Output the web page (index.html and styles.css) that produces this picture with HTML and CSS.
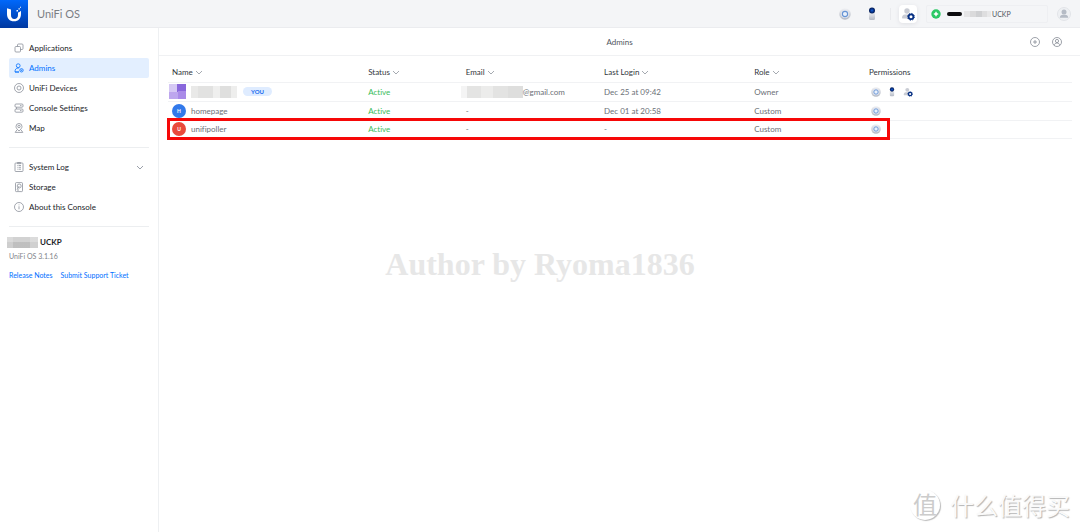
FILE: index.html
```html
<!DOCTYPE html>
<html lang="en">
<head>
<meta charset="utf-8">
<meta name="viewport" content="width=device-width, initial-scale=1">
<title>UniFi OS - Admins</title>
<link rel="stylesheet" href="styles.css">
</head>
<body>
<svg class="defs" aria-hidden="true">
  <defs>
    <linearGradient id="steel" x1="0" y1="0" x2="0" y2="1"><stop offset="0" stop-color="#f0f1f4"/><stop offset="1" stop-color="#b4b9c4"/></linearGradient>
    <radialGradient id="navy"><stop offset="0" stop-color="#1765d8"/><stop offset=".5" stop-color="#06328f"/><stop offset="1" stop-color="#041c50"/></radialGradient>
    <symbol id="disc" viewBox="0 0 12 12"><circle cx="6" cy="6" r="5.8" fill="url(#steel)"/><circle cx="6" cy="6" r="4" fill="#dfe4ee"/><circle cx="6" cy="6" r="2.600" fill="#e9f1fc" stroke="#6794d4" stroke-width="1.100"/></symbol>
    <symbol id="reader" viewBox="0 0 8 14"><path d="M1 5h6v6.500a1.500 1.500 0 0 1-1.500 1.500h-3a1.500 1.500 0 0 1-1.500-1.500z" fill="url(#steel)"/><circle cx="4" cy="3.500" r="3" fill="url(#navy)"/></symbol>
    <symbol id="usergear" viewBox="0 0 14 14"><circle cx="6" cy="4" r="2.700" fill="#c9ccd4"/><path d="M1 11c0-2 1-3.500 3-3.500h4c1 0 2 .5 2 1.500v2.500H1.500z" fill="#c9ccd4"/><circle cx="10" cy="9.800" r="2.400" fill="#fff" stroke="#062f83" stroke-width="1.800"/><circle cx="10" cy="9.800" r="3.400" fill="none" stroke="#062f83" stroke-width="1" stroke-dasharray="1.200 1.470"/></symbol>
    <symbol id="down" viewBox="0 0 8 5"><path d="M1 1l3 3 3-3" fill="none" stroke="currentColor" stroke-width=".9"/></symbol>
  </defs>
</svg>

<header class="topbar">
  <a class="logo" href="#" aria-label="UniFi home">
    <svg viewBox="0 0 28 28"><path d="M7 8.300l4 1.200v5.500c0 2.500 1 3.800 3.200 4.100C17 19 18 17.300 18 15v-2.500c1-.2 2-.8 3-1.800V14c0 4.500-2.500 7.300-7 7.300s-7-2.800-7-7.300z" fill="#fff"/><path d="M16.500 10H18v1.500h-1.500zM18.500 8.300h1.300v1.300h-1.300zM20 6.800h1v1h-1z" fill="#fff"/></svg>
  </a>
  <span class="product">UniFi OS</span>
  <nav class="apps" aria-label="Apps">
    <button class="app" type="button" aria-label="Network"><svg width="12" height="12"><use href="#disc"/></svg></button>
    <button class="app" type="button" aria-label="Access"><svg width="8" height="14"><use href="#reader"/></svg></button>
    <span class="app-rule"></span>
    <button class="app app-on" type="button" aria-label="Admins"><svg width="14" height="14"><use href="#usergear"/></svg></button>
    <button class="console" type="button">
      <svg width="10" height="10" viewBox="0 0 10 10"><circle cx="5" cy="5" r="4.700" fill="#2bc865"/><path d="M5 2.300L6 4l1.700 1L6 6 5 7.700 4 6 2.300 5 4 4z" fill="#fff"/></svg>
      <span class="scribble"></span><span class="mosaic mosaic-top"></span><span>UCKP</span>
    </button>
    <button class="avatar" type="button" aria-label="Account"><svg width="14" height="14" viewBox="0 0 14 14"><circle cx="7" cy="7" r="6.500" fill="#eef0f3" stroke="#e2e4e8"/><circle cx="7" cy="5" r="2.500" fill="#b5bbc5"/><path d="M2.800 10.800c0-2 1.500-3 3-3h2.400c1.500 0 3 1 3 3z" fill="#b5bbc5"/></svg></button>
  </nav>
</header>

<div class="body">
  <aside class="sidebar">
    <nav class="menu" aria-label="Console">
      <a class="item" href="#"><svg viewBox="0 0 10 10"><rect x="1" y="3.500" width="5.500" height="5.500" rx="1"/><path d="M3.500 3.500V2a1 1 0 0 1 1-1H8a1 1 0 0 1 1 1v3.500a1 1 0 0 1-1 1H6.500"/></svg>Applications</a>
      <a class="item item-on" href="#" aria-current="page"><svg viewBox="0 0 10 10"><circle cx="4.200" cy="2.700" r="1.900"/><path d="M5 9H1c0-2.400.8-4 3.200-4h1M1 9h4"/><circle cx="7.500" cy="7.300" r="1.700"/><circle cx="7.500" cy="7.300" r=".4"/></svg>Admins</a>
      <a class="item" href="#"><svg viewBox="0 0 10 10"><circle cx="5" cy="5" r="4.500"/><circle cx="5" cy="5" r="2"/></svg>UniFi Devices</a>
      <a class="item" href="#"><svg viewBox="0 0 10 10"><rect x="1" y="1" width="8" height="3.200" rx="1"/><rect x="1" y="6" width="8" height="3.200" rx="1"/><path d="M2.500 4.200V6M6 2.600h1.500M6 7.600h1.500"/></svg>Console Settings</a>
      <a class="item" href="#"><svg viewBox="0 0 10 10"><path d="M5 8C3.200 6.400 2 5 2 3.500a3 3 0 0 1 6 0C8 5 6.800 6.400 5 8zM3 6.800L1.200 9.400h7.600L7 6.800"/><circle cx="5" cy="3.500" r="1.200"/></svg>Map</a>
    </nav>
    <nav class="menu" aria-label="System">
      <a class="item" href="#"><svg viewBox="0 0 10 10"><rect x="1" y="1" width="8" height="8.500" rx=".8"/><path d="M3.500 .5h3v1.200h-3zM3 3.500h.6M4.500 3.500H7M3 5.300h.6M4.500 5.300H7M3 7.200h.6M4.500 7.200H7"/></svg>System Log<svg class="more"><use href="#down"/></svg></a>
      <a class="item" href="#"><svg viewBox="0 0 10 10"><rect x="1.500" y=".6" width="7" height="9" rx=".8"/><circle cx="5.200" cy="4" r="2"/><path d="M5.200 4L3 7.500M3 8h2"/></svg>Storage</a>
      <a class="item" href="#"><svg viewBox="0 0 10 10"><circle cx="5" cy="5" r="4.500"/><path d="M5 4.300v3M5 2.500v.8"/></svg>About this Console</a>
    </nav>
    <footer class="info">
      <div class="host"><span class="mosaic mosaic-host"></span><strong>UCKP</strong></div>
      <div class="version">UniFi OS 3.1.16</div>
      <div class="links"><a href="#">Release Notes</a><a href="#">Submit Support Ticket</a></div>
    </footer>
  </aside>

  <main class="main">
    <div class="titlebar">
      <h1>Admins</h1>
      <div class="actions">
        <button type="button" aria-label="Add admin"><svg viewBox="0 0 10 10"><circle cx="5" cy="5" r="4.500"/><path d="M5 3v4M3 5h4"/></svg></button>
        <button type="button" aria-label="Profile"><svg viewBox="0 0 10 10"><circle cx="5" cy="5" r="4.500"/><circle cx="5" cy="4" r="1.600"/><path d="M2.300 8.400C2.500 6.800 3.500 6 5 6s2.500.8 2.700 2.400"/></svg></button>
      </div>
    </div>
    <div class="list">
      <table class="admins">
        <colgroup><col class="c-name"><col class="c-status"><col class="c-email"><col class="c-login"><col class="c-role"><col class="c-perms"></colgroup>
        <thead><tr>
          <th>Name <svg class="sort"><use href="#down"/></svg></th>
          <th>Status <svg class="sort"><use href="#down"/></svg></th>
          <th>Email <svg class="sort"><use href="#down"/></svg></th>
          <th>Last Login <svg class="sort"><use href="#down"/></svg></th>
          <th>Role <svg class="sort"><use href="#down"/></svg></th>
          <th>Permissions</th>
        </tr></thead>
        <tbody>
          <tr>
            <td><div class="who who-me"><span class="face"></span><span class="mosaic mosaic-name"></span><span class="you">YOU</span></div></td>
            <td class="active">Active</td>
            <td><div class="mail"><span class="mosaic mosaic-mail"></span>@gmail.com</div></td>
            <td>Dec 25 at 09:42</td><td>Owner</td>
            <td><div class="perms"><svg width="10" height="10"><use href="#disc"/></svg><svg width="6" height="10"><use href="#reader"/></svg><svg width="10" height="10"><use href="#usergear"/></svg></div></td>
          </tr>
          <tr>
            <td><div class="who"><span class="badge badge-blue">H</span>homepage</div></td>
            <td class="active">Active</td><td>-</td><td>Dec 01 at 20:58</td><td>Custom</td>
            <td><div class="perms"><svg width="10" height="10"><use href="#disc"/></svg></div></td>
          </tr>
          <tr>
            <td><div class="who"><span class="badge badge-red">U</span>unifipoller</div></td>
            <td class="active">Active</td><td>-</td><td>-</td><td>Custom</td>
            <td><div class="perms"><svg width="10" height="10"><use href="#disc"/></svg></div></td>
          </tr>
        </tbody>
      </table>
      <div class="marker"></div>
    </div>
  </main>
</div>
<div class="author">Author by Ryoma1836</div>
<div class="site" lang="zh"><span class="seal">值</span><span>什么值得买</span></div>
</body>
</html>
```

FILE: styles.css
```css
* { box-sizing: border-box; }
body {
  margin: 0;
  min-height: 100vh;
  display: flex;
  flex-direction: column;
  position: relative;
  background: #fff;
  color: #212327;
  font: 8px/12px Lato, "Noto Sans", sans-serif;
  font-variant-ligatures: none;
}
a { color: inherit; text-decoration: none; }
button { border: 0; padding: 0; background: none; font: inherit; color: inherit; display: flex; align-items: center; justify-content: center; }
.defs { position: absolute; width: 0; height: 0; }

/* Top bar */
.topbar { display: flex; align-items: center; height: 28px; background: #f4f5f7; border-bottom: 1px solid #ebecef; }
.logo { width: 28px; height: 28px; background: linear-gradient(#0068fb, #0038a0); }
.logo svg { display: block; width: 28px; height: 28px; }
.product { margin-left: 9px; font-size: 11px; color: #7b7e84; }
.apps { margin-left: auto; display: flex; align-items: center; padding-right: 9px; }
.app { width: 18px; height: 18px; margin-right: 9px; border-radius: 4px; }
.app-rule { width: 1px; height: 12px; margin-right: 8px; background: #e9eaed; }
.app-on { background: #fff; box-shadow: 0 1px 4px #dfe0e4; }
.console { justify-content: flex-start; width: 122px; height: 18px; padding-left: 4px; margin-right: 9px; border: 1px solid #eeeff2; border-radius: 2px; font-size: 7px; color: #50565e; }
.scribble { width: 15px; height: 4px; margin: 0 2px 0 6px; border-radius: 2px; background: #0c0c0e; }

/* Pixelated, hidden names */
.mosaic { flex: none; background: linear-gradient(90deg, #e5e5e6 0 22%, #dadadb 22% 45%, #cfd0d2 45% 66%, #dededf 66% 85%, #e8e8e9 85%); }
.mosaic-top { width: 27px; height: 6px; margin-right: 1px; }
.mosaic-host { width: 31px; height: 11px; background: linear-gradient(#d9d9d9aa 0 45%, #b8b8b866 45%), linear-gradient(90deg, #ddd 0 20%, #c4c4c4 20% 75%, #e0e0e0 75%); }
.mosaic-name { width: 46px; height: 12px; background: linear-gradient(90deg, #e9e9e8 0 15%, #e2e2e1 15% 48%, #efefee 48% 62%, #dfdfde 62% 86%, #eeeeed 86%); }
.mosaic-mail { width: 62px; height: 12px; background: linear-gradient(90deg, #f4f4f4 0 10%, #e4e4e3 10% 32%, #ececeb 32% 52%, #e3e3e2 52% 76%, #dededd 76%); }

/* Sidebar */
.body { flex: 1; display: flex; }
.sidebar { flex: none; width: 159px; padding: 10px 9px 0; border-right: 1px solid #eef0f2; }
.menu { padding-bottom: 9px; margin-bottom: 9px; border-bottom: 1px solid #eceef0; }
.item { display: flex; align-items: center; gap: 5px; height: 20px; padding: 0 5px; border-radius: 2px; }
.item svg { width: 10px; height: 10px; fill: none; stroke: #8b909a; stroke-width: .8; overflow: visible; }
.item .more { width: 8px; height: 5px; margin-left: auto; color: #9095a0; stroke: none; }
.item-on { background: #e3efff; color: #006fff; }
.item-on svg { stroke: #006fff; }
.info { font-size: 7px; }
.host { display: flex; align-items: center; gap: 2px; margin-left: -2px; font-size: 8px; }
.version { margin-top: 2px; color: #808389; }
.links { display: flex; margin-top: 7px; gap: 8px; color: #006fff; white-space: nowrap; }

/* Content */
.main { flex: 1; min-width: 0; }
.titlebar { display: grid; grid-template-columns: 1fr auto 1fr; align-items: center; height: 28px; padding-right: 18px; border-bottom: 1px solid #f0f1f3; }
.titlebar h1 { grid-column: 2; margin: 0 -18px 0 0; font-size: 8px; font-weight: 400; color: #50565e; }
.actions { display: flex; justify-content: flex-end; gap: 12px; }
.actions svg { display: block; width: 10px; height: 10px; fill: none; stroke: #858a94; stroke-width: .8; }
.list { position: relative; padding: 6px 8px 0 9px; }
.admins { width: 100%; table-layout: fixed; border-collapse: separate; border-spacing: 0; color: #6b6f76; }
.c-name { width: 21.7%; }
.c-status { width: 10.8%; }
.c-email { width: 15.3%; }
.c-login { width: 16.6%; }
.c-role { width: 12.7%; }
.c-perms { width: 22.9%; }
.admins th, .admins td { padding: 0 4px; text-align: left; border-bottom: 1px solid #f1f2f4; white-space: nowrap; }
.admins th { height: 21px; font-weight: 400; color: #33373d; }
.admins td { height: 19px; padding-bottom: 1px; }
.admins tr:last-child td { height: 18px; }
.admins .active { color: #38bd5b; }
.sort { width: 8px; height: 5px; color: #9ba0a8; }
.who, .mail, .perms { display: flex; align-items: center; }
.who { gap: 5px; }
.who-me { margin-left: -3px; gap: 5px; }
.face { width: 17px; height: 15px; background: conic-gradient(#8967dc 25%, #a98be8 0 50%, #bda6ee 0 75%, #d5c8f4 0); }
.you { margin-left: 1px; padding: 0 8px; border-radius: 5px; background: #dfecff; color: #1a6df0; font-size: 6px; line-height: 9px; font-weight: 700; }
.badge { width: 14px; height: 14px; border-radius: 50%; color: #fff; font-size: 5px; line-height: 14px; font-weight: 700; text-align: center; }
.badge-blue { background: #3279ea; }
.badge-red { background: #e94a3c; }
.mail { margin-left: -5px; }
.perms { gap: 8px; padding-left: 2px; }

/* Annotation and watermarks lie over the page */
.marker { position: absolute; left: 8px; top: 62px; width: 78.5%; height: 22px; border: 3px solid #f60808; }
.author { position: absolute; top: 244px; left: 0; right: 0; text-align: center; font: bold 32px/40px "Liberation Serif", serif; color: #e7e7e7; }
.site { position: absolute; right: 10px; bottom: 10px; display: flex; align-items: center; gap: 10px; font: 24px/34px "Noto Sans CJK SC", sans-serif; color: #fafafa; text-shadow: 1px 1px 1px #b4b4b4; }
.seal { width: 30px; height: 30px; border-radius: 50%; box-shadow: 1px 1px 1px #bbb; line-height: 28px; text-align: center; color: #ccc; text-shadow: none; }
```
